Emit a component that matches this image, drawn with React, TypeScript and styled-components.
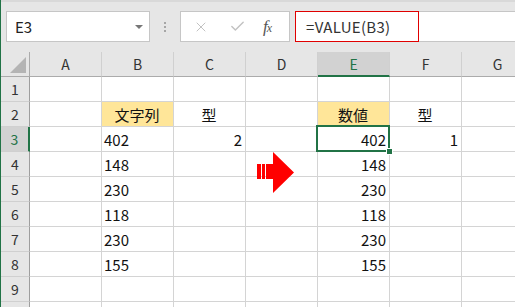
import { Fragment } from 'react';
import styled, { createGlobalStyle, css } from 'styled-components';
import { X, Check } from 'lucide-react';

const GlobalStyle = createGlobalStyle`
  html, body {
    margin: 0;
    padding: 0;
    background: #ffffff;
  }
  body {
    font-family: "Noto Sans CJK JP", "Noto Sans", sans-serif;
    overflow: hidden;
  }
`

const Window = styled.div`
  position: relative;
  width: 515px;
  height: 307px;
  overflow: hidden;
  border-left: 1px solid #217346;
  box-sizing: border-box;
  background: #ffffff;
`
const Toolbar = styled.div`
  height: 52px;
  box-sizing: border-box;
  border-top: 2px solid #d9d9d9;
  background: #e6e6e6;
  display: flex;
  align-items: flex-start;
  padding: 9px 0 0 5px;
`
const Field = styled.div`
  height: 31px;
  box-sizing: border-box;
  background: #ffffff;
  border: 1px solid #c6c6c6;
  display: flex;
  align-items: center;
`
const NameBox = styled(Field)`
  width: 144px;
  padding: 0 6px 0 8px;
  justify-content: space-between;
  font-size: 15px;
  color: #222;
`
const DropArrow = styled.span`
  width: 0;
  height: 0;
  border-left: 4px solid transparent;
  border-right: 4px solid transparent;
  border-top: 4px solid #777;
`
const Dots = styled.div`
  width: 30px;
  height: 31px;
  display: flex;
  flex-direction: column;
  align-items: center;
  justify-content: center;
  gap: 2px;
  span {
    width: 2px;
    height: 2px;
    background: #a6a6a6;
  }
`
const FxBox = styled(Field)`
  width: 110px;
  padding: 0 8px 0 12px;
  gap: 20px;
  color: #c2c2c2;
`
const Fx = styled.span`
  font-family: "Liberation Serif", "DejaVu Serif", serif;
  font-style: italic;
  font-size: 17px;
  color: #555;
  letter-spacing: -1px;
  margin-left: -3px;
  small {
    font-size: 12px;
  }
`
const FormulaBox = styled(Field)`
  flex: 1;
  margin-left: 5px;
  border-right: none;
  padding: 0;
`
const FormulaText = styled.div`
  width: 124px;
  height: 31px;
  box-sizing: border-box;
  margin-left: -1px;
  margin-top: -1px;
  margin-bottom: -1px;
  border: 1px solid #e00000;
  display: flex;
  align-items: center;
  padding-left: 10px;
  font-size: 15px;
  letter-spacing: 0.3px;
  color: #333;
`

const Sheet = styled.div`
  display: grid;
  grid-template-columns: 29px repeat(7, 72px);
  grid-auto-rows: 25px;
`
const HeadCell = styled.div<{ $active?: boolean }>`
  box-sizing: border-box;
  background: #e6e6e6;
  border-right: 1px solid #d0d0d0;
  border-bottom: 1px solid #ababab;
  display: flex;
  align-items: center;
  justify-content: center;
  font-size: 14px;
  color: #333;
  ${p => p.$active && css`
    background: #d2d2d2;
    color: #217346;
    border-bottom: 2px solid #217346;
  `}
`
const Corner = styled(HeadCell)`
  justify-content: flex-end;
  align-items: flex-end;
  padding: 0 3px 3px 0;
  border-right-color: #ababab;
`
const Triangle = styled.div`
  width: 16px;
  height: 16px;
  background: #b4b4b4;
  clip-path: polygon(100% 0, 100% 100%, 0 100%);
`
const RowHead = styled.div<{ $active?: boolean }>`
  box-sizing: border-box;
  background: #e6e6e6;
  border-right: 1px solid #9e9e9e;
  border-bottom: 1px solid #d0d0d0;
  display: flex;
  align-items: center;
  justify-content: center;
  font-size: 14px;
  color: #333;
  ${p => p.$active && css`
    background: #d2d2d2;
    color: #217346;
    border-right: 2px solid #217346;
  `}
`
const Cell = styled.div<{ $align?: string; $fill?: boolean; $selected?: boolean }>`
  position: relative;
  box-sizing: border-box;
  border-right: 1px solid #d4d4d4;
  border-bottom: 1px solid #d4d4d4;
  display: flex;
  align-items: center;
  justify-content: ${p => p.$align === 'right' ? 'flex-end' : p.$align === 'center' ? 'center' : 'flex-start'};
  padding: 0 3px 0 2px;
  font-size: 15px;
  color: #111;
  background: ${p => p.$fill ? '#ffe699' : '#ffffff'};
  ${p => p.$selected && css`
    &::after {
      content: '';
      position: absolute;
      left: -2px;
      top: -2px;
      right: -1px;
      bottom: -1px;
      border: 2px solid #217346;
    }
    &::before {
      content: '';
      position: absolute;
      right: -4px;
      bottom: -4px;
      width: 5px;
      height: 5px;
      background: #217346;
      border: 1px solid #ffffff;
      z-index: 2;
    }
  `}
`
const Arrow = styled.svg`
  position: absolute;
  left: 255px;
  top: 152px;
`

type CellData = { text?: string; align?: 'left' | 'right' | 'center'; fill?: boolean; selected?: boolean };

const cols = ['A', 'B', 'C', 'D', 'E', 'F', 'G'];
const values = ['402', '148', '230', '118', '230', '155'];

const rows: CellData[][] = Array.from({ length: 10 }, (_, i) => {
  const r = i + 1;
  const row: CellData[] = cols.map(() => ({}));
  if (r === 2) {
    row[1] = { text: '文字列', align: 'center', fill: true };
    row[2] = { text: '型', align: 'center' };
    row[4] = { text: '数値', align: 'center', fill: true };
    row[5] = { text: '型', align: 'center' };
  }
  if (r >= 3 && r <= 8) {
    const v = values[r - 3];
    row[1] = { text: v };
    row[4] = { text: v, align: 'right', selected: r === 3 };
  }
  if (r === 3) {
    row[2] = { text: '2', align: 'right' };
    row[5] = { text: '1', align: 'right' };
  }
  return row;
});

export default function App() {
  return (
    <Window>
      <GlobalStyle />
      <Toolbar>
        <NameBox>E3<DropArrow /></NameBox>
        <Dots><span /><span /><span /></Dots>
        <FxBox>
          <X size={16} strokeWidth={1.5} />
          <Check size={17} strokeWidth={2} />
          <Fx>f<small>x</small></Fx>
        </FxBox>
        <FormulaBox>
          <FormulaText>=VALUE(B3)</FormulaText>
        </FormulaBox>
      </Toolbar>
      <Sheet>
        <Corner><Triangle /></Corner>
        {cols.map(c => <HeadCell key={c} $active={c === 'E'}>{c}</HeadCell>)}
        {rows.map((row, i) => (
          <Fragment key={i}>
            <RowHead $active={i === 2}>{i + 1}</RowHead>
            {row.map((cell, j) => (
              <Cell key={j} $align={cell.align} $fill={cell.fill} $selected={cell.selected}>
                {cell.text}
              </Cell>
            ))}
          </Fragment>
        ))}
      </Sheet>
      <Arrow width="38" height="41" viewBox="0 0 38 41">
        <rect x="1" y="12" width="4" height="15" fill="#ff0000" />
        <rect x="6" y="12" width="3" height="15" fill="#ff0000" />
        <polygon points="10,12 17,12 17,0 38,20.5 17,41 17,27 10,27" fill="#ff0000" />
      </Arrow>
    </Window>
  )
}
